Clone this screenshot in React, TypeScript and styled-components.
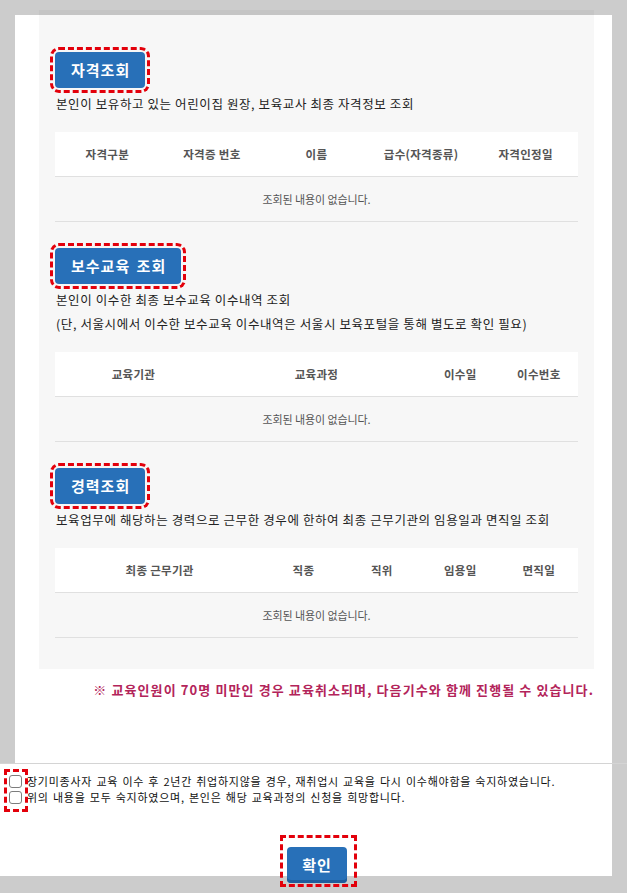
import React from "react";
import styled, { createGlobalStyle } from "styled-components";

const GlobalStyle = createGlobalStyle`
  html, body {
    margin: 0;
    padding: 0;
    background: #cccccc;
  }
  body {
    font-family: "Noto Sans CJK KR", "Noto Sans", sans-serif;
    color: #222;
  }
`;

const FONT = `"Noto Sans CJK KR", "Noto Sans", sans-serif`;

const Page = styled.div`
  width: 627px;
  min-height: 893px;
  background: #cccccc;
  padding-top: 15px;
  box-sizing: border-box;
  overflow: hidden;
`;

const Panel = styled.div`
  display: flex;
  flex-direction: column;
  margin-left: 15px;
  width: 597px;
  box-sizing: border-box;
  background: #ffffff;
  padding: 0 18px 63px 24px;
`;

const InnerBox = styled.div`
  margin-top: -5px;
  border-top: 5px solid #c5c5c5;
  background: #f7f7f7;
  padding: 37px 16px 31px;
  display: flex;
  flex-direction: column;
`;

const Section = styled.section<{ $first?: boolean }>`
  display: flex;
  flex-direction: column;
  align-items: flex-start;
  margin-top: ${(p) => (p.$first ? "0" : "26px")};
`;

const SectionButton = styled.button`
  height: 36px;
  padding: 0 15px 0 16px;
  border: none;
  border-radius: 4px;
  background: #2870b8;
  color: #ffffff;
  font-family: ${FONT};
  font-size: 15px;
  font-weight: 700;
  line-height: 36px;
  letter-spacing: 1px;
  word-spacing: 2px;
  outline: 3px dashed #e3000b;
  outline-offset: 2px;
  cursor: pointer;
`;

const Desc = styled.div`
  margin-top: 4px;
  padding-left: 1px;
  font-size: 12.5px;
  line-height: 24px;
  color: #222;
  letter-spacing: 0.6px;
`;

const Table = styled.table`
  margin-top: 16px;
  width: 523px;
  border-collapse: collapse;
  table-layout: fixed;
  font-family: ${FONT};
`;

const HeadCell = styled.th`
  height: 44px;
  padding: 0;
  background: #ffffff;
  border-bottom: 1px solid #e0e0e0;
  font-size: 11.5px;
  font-weight: 700;
  color: #555;
  text-align: center;
  letter-spacing: 0.3px;
`;

const EmptyCell = styled.td`
  height: 44px;
  padding: 0;
  border-bottom: 1px solid #e0e0e0;
  font-size: 11px;
  color: #555;
  text-align: center;
  letter-spacing: -0.1px;
`;

const Notice = styled.p`
  margin: 11px 0 0;
  text-align: right;
  font-size: 13px;
  line-height: 20px;
  font-weight: 700;
  color: #b3245a;
  letter-spacing: 1.1px;
`;

const Divider = styled.div`
  width: 627px;
  height: 1px;
  background: #d4d4d4;
`;

const AgreeSection = styled.div`
  position: relative;
  width: 612px;
  height: 112px;
  background: #ffffff;
  padding-top: 9px;
  box-sizing: border-box;
`;

const AgreeRow = styled.label`
  display: flex;
  align-items: center;
  height: 16px;
  padding-left: 9px;
  font-size: 11px;
  color: #111;
  letter-spacing: 0.75px;
  word-spacing: 1px;
`;

const Check = styled.input`
  appearance: none;
  -webkit-appearance: none;
  width: 13px;
  height: 13px;
  margin: 0 5px 0 0;
  border: 1px solid #7d7d7d;
  border-radius: 3px;
  background: #fff;
  box-sizing: border-box;
  flex: none;
`;

const CheckHighlight = styled.div`
  position: absolute;
  left: 4px;
  top: 5px;
  width: 24px;
  height: 43px;
  border: 3px dashed #e3000b;
  box-sizing: border-box;
  pointer-events: none;
`;

const ConfirmArea = styled.div`
  display: flex;
  justify-content: center;
  margin-top: 30px;
  padding-left: 25px;
`;

const ConfirmWrap = styled.div`
  border: 3px dashed #e3000b;
  padding: 9px 7px 1px 4px;
`;

const ConfirmButton = styled.button`
  display: block;
  height: 36px;
  padding: 0 15px;
  border: none;
  border-radius: 4px;
  background: #2870b8;
  box-shadow: inset 0 -3px 0 #1f5d9c;
  color: #fff;
  font-family: ${FONT};
  font-size: 15px;
  font-weight: 700;
  line-height: 36px;
  letter-spacing: 1px;
  cursor: pointer;
`;

type Col = { label: string; width: string };

const tables: { title: string; desc: string[]; cols: Col[] }[] = [
  {
    title: "자격조회",
    desc: ["본인이 보유하고 있는 어린이집 원장, 보육교사 최종 자격정보 조회"],
    cols: [
      { label: "자격구분", width: "20%" },
      { label: "자격증 번호", width: "20%" },
      { label: "이름", width: "20%" },
      { label: "급수(자격종류)", width: "20%" },
      { label: "자격인정일", width: "20%" },
    ],
  },
  {
    title: "보수교육 조회",
    desc: [
      "본인이 이수한 최종 보수교육 이수내역 조회",
      "(단, 서울시에서 이수한 보수교육 이수내역은 서울시 보육포털을 통해 별도로 확인 필요)",
    ],
    cols: [
      { label: "교육기관", width: "30%" },
      { label: "교육과정", width: "40%" },
      { label: "이수일", width: "15%" },
      { label: "이수번호", width: "15%" },
    ],
  },
  {
    title: "경력조회",
    desc: ["보육업무에 해당하는 경력으로 근무한 경우에 한하여 최종 근무기관의 임용일과 면직일 조회"],
    cols: [
      { label: "최종 근무기관", width: "40%" },
      { label: "직종", width: "15%" },
      { label: "직위", width: "15%" },
      { label: "임용일", width: "15%" },
      { label: "면직일", width: "15%" },
    ],
  },
];

export default function App() {
  return (
    <>
      <GlobalStyle />
      <Page>
        <Panel>
          <InnerBox>
            {tables.map((t, i) => (
              <Section key={t.title} $first={i === 0}>
                <SectionButton type="button">{t.title}</SectionButton>
                <Desc>
                  {t.desc.map((d) => (
                    <div key={d}>{d}</div>
                  ))}
                </Desc>
                <Table>
                  <colgroup>
                    {t.cols.map((c) => (
                      <col key={c.label} style={{ width: c.width }} />
                    ))}
                  </colgroup>
                  <thead>
                    <tr>
                      {t.cols.map((c) => (
                        <HeadCell key={c.label}>{c.label}</HeadCell>
                      ))}
                    </tr>
                  </thead>
                  <tbody>
                    <tr>
                      <EmptyCell colSpan={t.cols.length}>조회된 내용이 없습니다.</EmptyCell>
                    </tr>
                  </tbody>
                </Table>
              </Section>
            ))}
          </InnerBox>
          <Notice>※ 교육인원이 70명 미만인 경우 교육취소되며, 다음기수와 함께 진행될 수 있습니다.</Notice>
        </Panel>
        <Divider />
        <AgreeSection>
          <AgreeRow>
            <Check type="checkbox" />
            장기미종사자 교육 이수 후 2년간 취업하지않을 경우, 재취업시 교육을 다시 이수해야함을 숙지하였습니다.
          </AgreeRow>
          <AgreeRow>
            <Check type="checkbox" />
            위의 내용을 모두 숙지하였으며, 본인은 해당 교육과정의 신청을 희망합니다.
          </AgreeRow>
          <CheckHighlight />
          <ConfirmArea>
            <ConfirmWrap>
              <ConfirmButton type="button">확인</ConfirmButton>
            </ConfirmWrap>
          </ConfirmArea>
        </AgreeSection>
      </Page>
    </>
  );
}
